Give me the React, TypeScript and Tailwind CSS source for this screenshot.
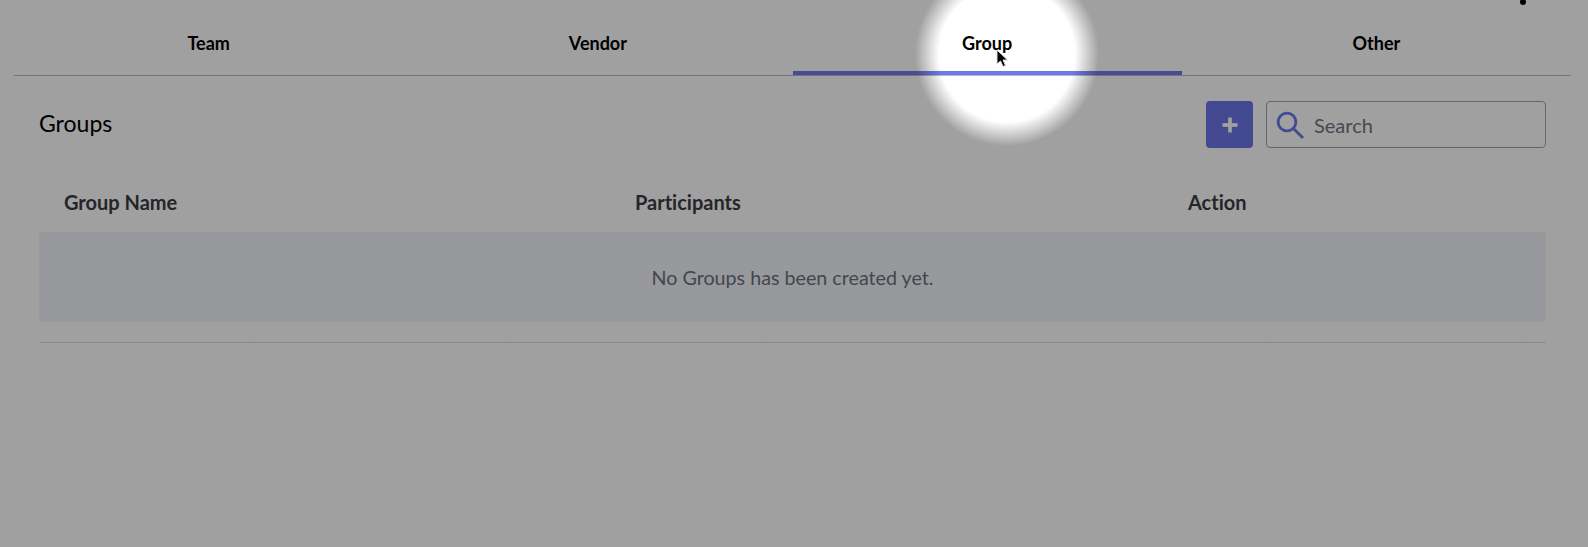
const tabs = ["Team", "Vendor", "Group", "Other"]
const font = "font-['Lato','Liberation_Sans',sans-serif]"

function SearchBox() {
  return (
    <div className="flex h-[47px] w-[280px] items-center gap-[10px] rounded-[4px] border border-[#9ea3b3] pl-[9px]">
      <svg width="28" height="28" viewBox="0 0 28 28" fill="none" stroke="#6a75e6" strokeWidth="2.8">
        <circle cx="11" cy="11" r="8.9" />
        <line x1="17.2" y1="17.2" x2="27" y2="27" />
      </svg>
      <span className="text-[20px] leading-6 text-[#6f737f]">Search</span>
    </div>
  )
}

export default function App() {
  return (
    <div className={`relative h-[547px] overflow-hidden bg-white [font-variant-ligatures:none] ${font}`}>
      <div className="ml-[14px] flex h-[76px] w-[1557px] border-b border-[#b4b4cc]">
        {tabs.map((tab) => (
          <div
            key={tab}
            className={`h-[75px] flex-1 border-b-4 pt-[31px] text-center text-[18px] leading-6 font-bold text-black ${
              tab === "Group" ? "border-[#7079e8]" : "border-transparent"
            }`}
          >
            {tab}
          </div>
        ))}
      </div>

      <div className="mx-[39px] mt-[25px] flex w-[1507px] items-center justify-between">
        <h2 className="mb-[4px] text-[23px] leading-7 text-black">Groups</h2>
        <div className="flex items-center gap-[13px]">
          <button className="flex h-[47px] w-[47px] items-center justify-center rounded-[4px] bg-[#6a75e6]">
            <svg width="16" height="16" viewBox="0 0 16 16" fill="none" stroke="white" strokeWidth="3.7">
              <line x1="8" y1="0.5" x2="8" y2="15.5" />
              <line x1="0.5" y1="8" x2="15.5" y2="8" />
            </svg>
          </button>
          <SearchBox />
        </div>
      </div>

      <div className="mx-[39px] w-[1507px]">
        <div className="grid h-[84px] grid-cols-[571px_553px_1fr] items-end pb-[18px] pl-[25px] text-[20px] leading-6 font-bold text-[#3a3b43]">
          <div>Group Name</div>
          <div>Participants</div>
          <div>Action</div>
        </div>
        <div className="flex h-[90px] items-center justify-center rounded-[4px] bg-[#f1f3f9] pt-[1px] text-[19.7px] text-[#6c707b]">
          No Groups has been created yet.
        </div>
        <div className="mt-[20px] border-t border-[#dcdcdc]" />
      </div>

      {/* kebab menu dot cut by the top edge */}
      <span className="absolute top-[-1px] left-[1520px] h-[6px] w-[6px] rounded-full bg-black" />

      {/* dim layer with spotlight round the clicked tab */}
      <div className="pointer-events-none absolute inset-0 bg-[radial-gradient(circle_92px_at_1007px_54px,rgba(0,0,0,0)_74%,rgba(0,0,0,0.373)_100%)]" />

      {/* mouse pointer */}
      <svg className="absolute top-[49px] left-[996px]" width="13" height="19" viewBox="0 0 13 19">
        <path d="M1 1 L1 15 L4.5 12 L7 17.5 L9.5 16.5 L7 11 L11.5 11 Z" fill="black" stroke="#dddddd" strokeWidth="1" />
      </svg>
    </div>
  )
}
